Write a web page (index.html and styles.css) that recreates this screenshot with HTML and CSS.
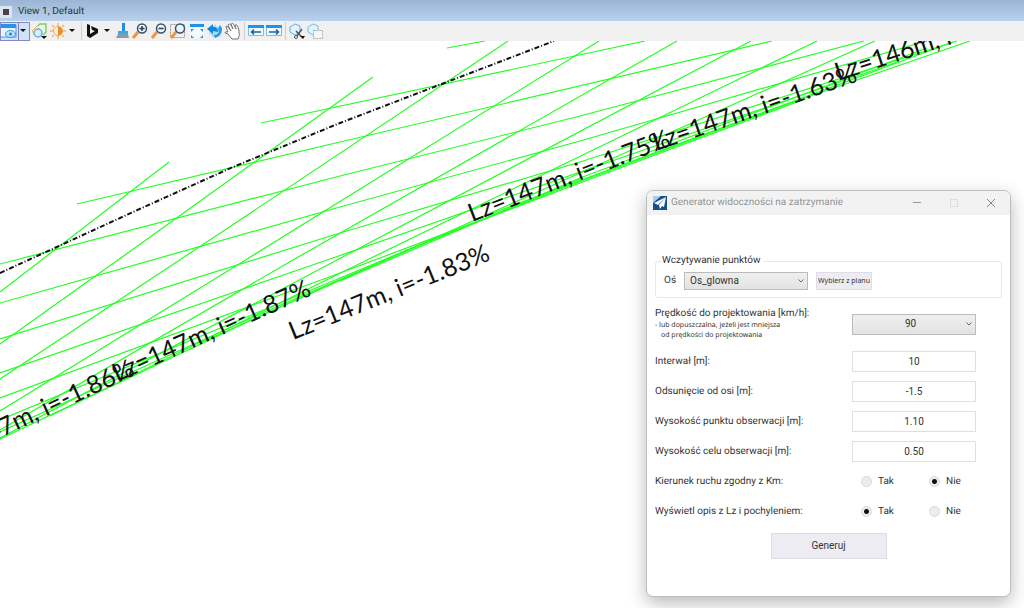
FILE: index.html
```html
<!DOCTYPE html>
<html lang="pl">
<head>
<meta charset="utf-8">
<title>View 1, Default</title>
<link rel="stylesheet" href="styles.css">
</head>
<body>
<header class="titlebar">
  <svg class="view-icon" width="12" height="12" viewBox="0 0 12 12"><rect width="12" height="12" rx="1" fill="#dde6f0"/><rect x="3" y="3" width="6" height="6" fill="#4a4345"/></svg>
  <h1 class="view-title">View 1, Default</h1>
</header>
<nav class="toolbar" aria-label="View tools">
  <button class="tool tool-spaced" aria-label="View attributes">
    <svg width="30" height="19" viewBox="0 0 30 19"><rect width="30" height="19" fill="#cfe2f6"/><path d="M0 3h16v12H0z" fill="#eaf6ff" stroke="#3b9ee8"/><path d="M0 2h16v4H0z" fill="#2196ea"/><ellipse cx="10.500" cy="12" rx="5" ry="3.500" fill="#bfe2fb" stroke="#2d98e5"/><circle cx="10.500" cy="12" r="1.500" fill="#1684d8"/><path d="M18.500 0v19" stroke="#8080bf"/><path d="M20 7h6l-3 3z" fill="#111"/><rect x=".5" y=".5" width="29" height="18" fill="none" stroke="#8888c0"/></svg>
  </button>
  <button class="tool tool-spaced" aria-label="Display style">
    <svg width="17" height="18" viewBox="0 0 17 18"><path d="M1 9l5-5 4-1-3 5-2 7z" fill="#fdeccb" stroke="#f3b45c"/><path d="M7 4l2-2h6v8l-3 3" fill="#e9f7df" stroke="#80cc78" stroke-width="1.500"/><circle cx="7" cy="11" r="4" fill="#d4edfb" stroke="#5fb3e8" stroke-width="1.500"/><path d="M10 14h6l-3 3z" fill="#111"/></svg>
  </button>
  <button class="tool tool-spaced" aria-label="Brightness">
    <svg width="28" height="18" viewBox="0 0 28 18"><g stroke="#f5b56c" stroke-width="1.500"><path d="M9 1v3M9 14v3M1 9h3M14 9h3M3 3l2 2M13 13l2 2M3 15l2-2M13 5l2-2"/></g><circle cx="9" cy="9" r="4.500" fill="#fff2df" stroke="#f3a550"/><path d="M9 4.500a4.500 4.500 0 0 1 0 9z" fill="#f18a22"/><path d="M20 7h6l-3 3z" fill="#111"/></svg>
  </button>
  <span class="divider divider-wide"></span>
  <button class="tool tool-spaced" aria-label="Map background">
    <svg width="26" height="18" viewBox="0 0 26 18"><path d="M2 2l3 1v9l5-3-3-1-1-4 7 3v4L5 16l-3-2z" fill="#111"/><path d="M19 7h6l-3 3z" fill="#111"/></svg>
  </button>
  <button class="tool tool-spaced" aria-label="Update view">
    <svg width="18" height="18" viewBox="0 0 18 18"><path d="M10 1h3v8h-3z" fill="#1591e5"/><path d="M6 9h10v3H6z" fill="#3ba9e9"/><path d="M6 12h10l1 4H4z" fill="#8a9aa6"/></svg>
  </button>
  <button class="tool tool-spaced" aria-label="Zoom in">
    <svg width="18" height="18" viewBox="0 0 18 18"><path d="M7 10l-5 6" stroke="#ef943e" stroke-width="3"/><circle cx="11" cy="6.500" r="4.500" fill="#e6f4fc" stroke="#3a526a" stroke-width="1.500"/><path d="M8.500 6.500h5M11 4v5" stroke="#283d52" stroke-width="1.500"/></svg>
  </button>
  <button class="tool tool-spaced" aria-label="Zoom out">
    <svg width="18" height="18" viewBox="0 0 18 18"><path d="M7 10l-5 6" stroke="#ef943e" stroke-width="3"/><circle cx="11" cy="6.500" r="4.500" fill="#e6f4fc" stroke="#3a526a" stroke-width="1.500"/><path d="M8.500 6.500h5" stroke="#283d52" stroke-width="1.500"/></svg>
  </button>
  <button class="tool tool-spaced" aria-label="Window area">
    <svg width="18" height="18" viewBox="0 0 18 18"><path d="M1.500 2.500h14v13h-14z" fill="none" stroke="#999" stroke-dasharray="2 1"/><path d="M7 10l-5 6" stroke="#ef943e" stroke-width="3"/><circle cx="11" cy="6.500" r="4.500" fill="#e6f4fc" stroke="#3a526a" stroke-width="1.500"/></svg>
  </button>
  <button class="tool" aria-label="Fit view">
    <svg width="18" height="18" viewBox="0 0 18 18"><path d="M2 2h14v14H2z" fill="#f2faff"/><path d="M2 2h14v3H2z" fill="#1c94e9"/><path d="M3 7v3l3-3zM15 7v3l-3-3zM3 16v-3l3 3zM15 16v-3l-3 3z" fill="#258fe0"/></svg>
  </button>
  <button class="tool" aria-label="Rotate view">
    <svg width="18" height="18" viewBox="0 0 18 18"><path d="M5 6l5-4v2l6 2-2 8-6 2-5-5z" fill="#a9dbf8"/><path d="M1 7l6-5v3c4 0 5 2 5 5l-5-1v3z" fill="#0e87dd"/><path d="M14 3c4 4 2 11-5 13l-1-3c4 0 6-3 4-6z" fill="#269be9"/></svg>
  </button>
  <button class="tool" aria-label="Pan view">
    <svg width="18" height="18" viewBox="0 0 18 18"><path d="M2 5q0-2 2 0l3 4-3-6q1-2 3 0l2 4-2-5q2-2 3 1l2 4-1-4q2-1 3 2l1 4q1 5-1 8H8l-4-5-3-1q0-2 3-1z" fill="#fff" stroke="#777"/></svg>
  </button>
  <span class="divider"></span>
  <button class="tool" aria-label="View previous">
    <svg width="18" height="18" viewBox="0 0 18 18"><path d="M1.500 4.500h15v9h-15z" fill="#f2faff" stroke="#77bff1"/><path d="M1 3h16v3H1z" fill="#1996eb"/><path d="M4 10h10M7 7.500L4.500 10 7 12.500" fill="none" stroke="#15669f" stroke-width="1.500"/></svg>
  </button>
  <button class="tool" aria-label="View next">
    <svg width="18" height="18" viewBox="0 0 18 18"><path d="M1.500 4.500h15v9h-15z" fill="#f2faff" stroke="#77bff1"/><path d="M1 3h16v3H1z" fill="#1996eb"/><path d="M4 10h10M11 7.500l2.500 2.500-2.500 2.500" fill="none" stroke="#15669f" stroke-width="1.500"/></svg>
  </button>
  <span class="divider"></span>
  <button class="tool" aria-label="Clip volume">
    <svg width="18" height="18" viewBox="0 0 18 18"><path d="M2 5l5-3 5 2v6l-5 3-5-3z" fill="#e1f3fd" stroke="#5bb3e8"/><path d="M8 9l6 6M14 7l-5 7" stroke="#555" stroke-width="1.500"/><circle cx="8" cy="15" r="1.500" fill="none" stroke="#555"/><path d="M12 14h5l-2 3z" fill="#111"/></svg>
  </button>
  <button class="tool" aria-label="Clip mask">
    <svg width="18" height="18" viewBox="0 0 18 18"><path d="M2 5l5-3 5 2v6l-5 3-5-3z" fill="#e1f3fd" stroke="#75bfec"/><path d="M7.500 8.500h9v8h-9z" fill="#f7f7f7" stroke="#aaa" stroke-dasharray="2 1"/></svg>
  </button>
</nav>
<main class="workspace">
  <svg class="drawing" width="100%" height="100%">
    <g transform="translate(0 -41)">
      <g class="sightlines">
        <path d="M447 48L485 41"/>
        <path d="M261 123L645 41"/>
        <path d="M77 204L340 142L772 41"/>
        <path d="M0 264L340 176L580 116L864 41"/>
        <path d="M0 303L340 207L580 141L927 41"/>
        <path d="M0 339L340 233L580 162L957 41"/>
        <path d="M0 373L327 260L900 61"/>
        <path d="M0 398L340 273L580 183L805 99"/>
        <path d="M0 420L340 278L580 179"/>
        <path d="M0 432L260 314L420 245"/>
        <path d="M169 162L0 292"/>
        <path d="M373 77L146 240L0 344"/>
        <path d="M508 41L240 220L0 379"/>
        <path d="M599 41L244 261L0 411"/>
        <path d="M677 41L293 260L0 430"/>
        <path d="M751 41L337 260L0 438"/>
        <path d="M817 41L367 260L50 416"/>
        <path d="M875 41L560 182L200 343"/>
        <path d="M927 48L580 178L340 281"/>
        <path d="M953 42L493 213"/>
        <path d="M970 41L805 98L560 189L407 250L260 316L0 439"/>
      </g>
      <path class="axis" d="M0 273L72 240L133 212L233 167L340 123L447 82L554 41"/>
      <g class="labels">
        <text transform="translate(-58 465) rotate(-25)">Lz=147m, i=-1.86%</text>
        <text transform="translate(117 382) rotate(-24)">Lz=147m, i=-1.87%</text>
        <text transform="translate(293 340) rotate(-22)">Lz=147m, i=-1.83%</text>
        <text transform="translate(472 222) rotate(-21)">Lz=147m, i=-1.75%</text>
        <text transform="translate(656 151) rotate(-19)">Lz=147m, i=-1.63%</text>
        <text transform="translate(838 81) rotate(-18)">Lz=146m, i=-1.52%</text>
      </g>
    </g>
  </svg>
  <section class="dialog" role="dialog" aria-labelledby="dialog-title">
    <header class="dialog-bar">
      <svg width="14" height="14" viewBox="0 0 14 14"><path d="M0 0h14v14H0z" fill="#15508d"/><path d="M0 0h8L0 7z" fill="#a9cce8"/><path d="M13 1L1 7l4 2zM13 1L6 9l1 4 2-3 2 1z" fill="#fff"/></svg>
      <h2 class="dialog-title" id="dialog-title">Generator widoczności na zatrzymanie</h2>
      <div class="window-buttons">
        <button class="window-button" aria-label="Minimalizuj"><svg width="10" height="10" viewBox="0 0 10 10"><path d="M1 4.500h8" stroke="#999"/></svg></button>
        <button class="window-button" aria-label="Maksymalizuj" disabled><svg width="10" height="10" viewBox="0 0 10 10"><rect x="1.500" y="1.500" width="7" height="7" fill="none" stroke="#ddd"/></svg></button>
        <button class="window-button" aria-label="Zamknij"><svg width="10" height="10" viewBox="0 0 10 10"><path d="M1 1l8 8M9 1L1 9" stroke="#888"/></svg></button>
      </div>
    </header>
    <form class="form">
      <fieldset class="group">
        <legend class="legend">Wczytywanie punktów</legend>
        <div class="axis-row">
          <label for="axis">Oś</label>
          <span class="select-wrap">
            <select class="select" id="axis"><option>Os_glowna</option></select>
            <svg class="chevron" width="6" height="4" viewBox="0 0 6 4"><path d="M.5.5L3 3 5.500.5" fill="none" stroke="#666"/></svg>
          </span>
          <button class="button pick" type="button">Wybierz z planu</button>
        </div>
      </fieldset>
      <div class="row speed-row">
        <label for="speed">Prędkość do projektowania [km/h]:<small class="hint">- lub dopuszczalna, jeżeli jest mniejsza</small><small class="hint hint-next">od prędkości do projektowania</small></label>
        <span class="select-wrap">
          <select class="select select-center" id="speed"><option>90</option></select>
          <svg class="chevron" width="6" height="4" viewBox="0 0 6 4"><path d="M.5.5L3 3 5.500.5" fill="none" stroke="#666"/></svg>
        </span>
      </div>
      <div class="row"><label for="step">Interwał [m]:</label><input class="field" id="step" value="10"></div>
      <div class="row"><label for="offset">Odsunięcie od osi [m]:</label><input class="field" id="offset" value="-1.5"></div>
      <div class="row"><label for="eye">Wysokość punktu obserwacji [m]:</label><input class="field" id="eye" value="1.10"></div>
      <div class="row"><label for="target">Wysokość celu obserwacji [m]:</label><input class="field" id="target" value="0.50"></div>
      <div class="row" role="radiogroup" aria-labelledby="direction">
        <span id="direction">Kierunek ruchu zgodny z Km:</span>
        <div class="choices">
          <label class="choice"><input class="radio" type="radio" name="direction">Tak</label>
          <label class="choice"><input class="radio" type="radio" name="direction" checked>Nie</label>
        </div>
      </div>
      <div class="row" role="radiogroup" aria-labelledby="describe">
        <span id="describe">Wyświetl opis z Lz i pochyleniem:</span>
        <div class="choices">
          <label class="choice"><input class="radio" type="radio" name="describe" checked>Tak</label>
          <label class="choice"><input class="radio" type="radio" name="describe">Nie</label>
        </div>
      </div>
      <button class="button generate" type="button">Generuj</button>
    </form>
  </section>
</main>
</body>
</html>
```

FILE: styles.css
```css
* { box-sizing: border-box; }

body {
  display: flex;
  flex-direction: column;
  height: 100vh;
  margin: 0;
  overflow: hidden;
  background: #fff;
  color: #333;
  font: 10px/14px Roboto, "Noto Sans", sans-serif;
  text-rendering: geometricPrecision;
}

button, input, select { margin: 0; padding: 0; font: inherit; color: inherit; }
svg { display: block; }

.titlebar {
  display: flex;
  flex: none;
  align-items: center;
  gap: 6px;
  height: 21px;
  padding-top: 2px;
  background: linear-gradient(#9bb5d5, #b9d1ec);
}
.view-title { margin: 0; font-size: 10px; font-weight: 400; }

.toolbar {
  display: flex;
  flex: none;
  align-items: center;
  height: 20px;
  background: #f0f0f0;
}
.tool { flex: none; border: 0; background: none; }
.tool-spaced { margin-right: 1px; }
.divider { flex: none; width: 1px; height: 18px; margin: 0 2px; background: #d0d0d0; }
.divider-wide { margin: 0 3px; }

.workspace { position: relative; flex: 1; min-height: 0; overflow: hidden; }
.drawing { overflow: hidden; }
.sightlines { fill: none; stroke: #24ff24; stroke-width: 1.2; }
.axis { fill: none; stroke: #111; stroke-width: 2; stroke-dasharray: 5 2 1 2; }
.labels { fill: #111; font: 25px Lato, sans-serif; }

.dialog {
  position: absolute;
  top: 149px;
  right: 13px;
  width: 365px;
  overflow: hidden;
  border: 1px solid #bdbdbd;
  border-radius: 7px;
  background: #fff;
  box-shadow: 0 6px 18px rgba(0, 0, 0, 0.28);
}
.dialog-bar {
  display: flex;
  align-items: center;
  gap: 4px;
  height: 24px;
  padding-left: 6px;
  background: #f2f2f2;
}
.dialog-title { margin: 0; color: #929292; font-size: 10px; font-weight: 400; }
.window-buttons { display: flex; gap: 27px; margin-left: auto; padding-right: 14px; }
.window-button { border: 0; background: none; }

.form { display: flex; flex-direction: column; padding: 39px 8px 37px; }
.group { min-width: 0; margin: 0; padding: 0 8px 7px; border: 1px solid #e0e9ee; border-radius: 3px; }
.legend { padding: 0 4px 0 0; margin-left: -2px; }
.axis-row { display: flex; align-items: center; gap: 8px; padding-top: 4px; }
.axis-row .select-wrap { width: 124px; height: 18px; }

.select-wrap { position: relative; display: block; height: 21px; }
.select {
  appearance: none;
  width: 100%;
  height: 100%;
  padding: 0 12px 0 5px;
  border: 1px solid #bbb;
  border-radius: 0;
  background: linear-gradient(#efefef, #e3e3e3);
}
.select-center { text-align: center; text-align-last: center; }
.chevron { position: absolute; top: 40%; right: 4px; }

.button { border: 1px solid #dedde6; background: #edecf2; }
.pick { width: 56px; height: 18px; font: 7px/10px "Noto Sans", sans-serif; white-space: nowrap; }

.row {
  display: grid;
  grid-template-columns: 1fr 124px;
  align-items: center;
  height: 21px;
  margin-bottom: 9px;
  padding-right: 26px;
}
.speed-row { height: 32px; margin: 9px 0 12px; }
.hint { display: block; font: 7px/10px "Noto Sans", sans-serif; }
.hint-next { padding-left: 6px; }
.field {
  width: 100%;
  height: 21px;
  border: 1px solid #dedee8;
  background: #fff;
  text-align: center;
}
.choices { display: grid; grid-template-columns: 68px 1fr; padding-left: 9px; }
.choice { display: flex; align-items: center; gap: 6px; }
.radio {
  appearance: none;
  width: 11px;
  height: 11px;
  border: 1px solid #d8d7e0;
  border-radius: 50%;
  background: #edecf2;
}
.radio:checked { background: radial-gradient(circle, #111 0 2px, #edecf2 3px); }
.generate { align-self: center; width: 116px; height: 26px; margin-top: 2px; }
```
